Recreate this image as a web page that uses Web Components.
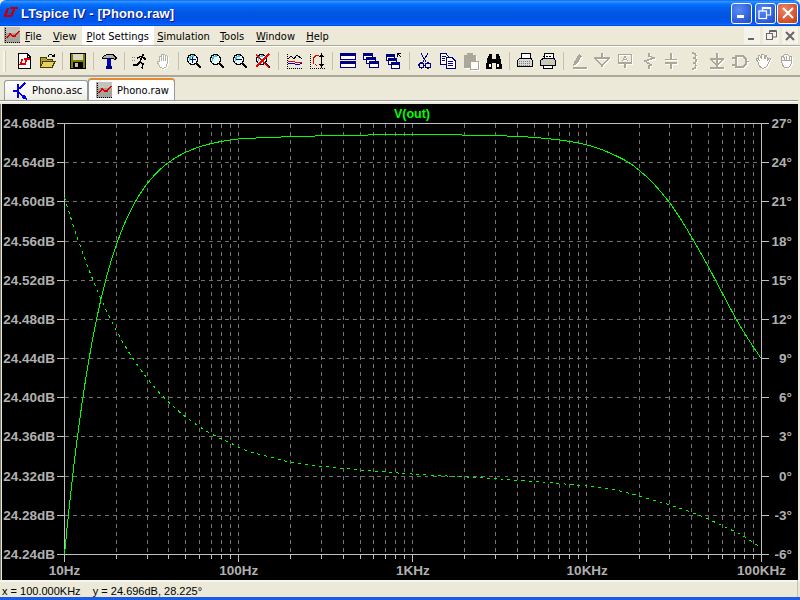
<!DOCTYPE html>
<html>
<head>
<meta charset="utf-8">
<title>LTspice IV</title>
<style>
  html, body { margin: 0; padding: 0; width: 800px; height: 600px; overflow: hidden; background: #ece9d8; }
</style>
</head>
<body>
<xp-window>
  <title-bar>LTspice IV - [Phono.raw]</title-bar>
  <menu-bar>
    <menu-item w="28.5"><u>F</u>ile</menu-item>
    <menu-item w="34.5"><u>V</u>iew</menu-item>
    <menu-item w="71.5" hot><u>P</u>lot Settings</menu-item>
    <menu-item w="60"><u>S</u>imulation</menu-item>
    <menu-item w="37"><u>T</u>ools</menu-item>
    <menu-item w="50"><u>W</u>indow</menu-item>
    <menu-item w="34"><u>H</u>elp</menu-item>
  </menu-bar>
  <tool-bar>
    <tool-btn icon="newdoc"></tool-btn>
    <tool-btn icon="open"></tool-btn>
    <tool-sep></tool-sep>
    <tool-btn icon="save"></tool-btn>
    <tool-sep></tool-sep>
    <tool-btn icon="hammer"></tool-btn>
    <tool-sep></tool-sep>
    <tool-btn icon="run"></tool-btn>
    <tool-btn icon="pan" off></tool-btn>
    <tool-sep></tool-sep>
    <tool-btn icon="zoomin"></tool-btn>
    <tool-btn icon="zoomfit"></tool-btn>
    <tool-btn icon="zoomout"></tool-btn>
    <tool-btn icon="zoomx"></tool-btn>
    <tool-sep></tool-sep>
    <tool-btn icon="autorange"></tool-btn>
    <tool-btn icon="manual"></tool-btn>
    <tool-sep></tool-sep>
    <tool-btn icon="tile"></tool-btn>
    <tool-btn icon="cascade"></tool-btn>
    <tool-btn icon="cascade2"></tool-btn>
    <tool-sep></tool-sep>
    <tool-btn icon="cut"></tool-btn>
    <tool-btn icon="copy"></tool-btn>
    <tool-btn icon="paste" off></tool-btn>
    <tool-btn icon="find"></tool-btn>
    <tool-sep></tool-sep>
    <tool-btn icon="preview"></tool-btn>
    <tool-btn icon="print"></tool-btn>
    <tool-sep></tool-sep>
    <tool-btn icon="wire" off></tool-btn>
    <tool-btn icon="ground" off></tool-btn>
    <tool-btn icon="label" off></tool-btn>
    <tool-btn icon="res" off></tool-btn>
    <tool-btn icon="cap" off></tool-btn>
    <tool-btn icon="ind" off></tool-btn>
    <tool-btn icon="diode" off></tool-btn>
    <tool-btn icon="gate" off></tool-btn>
    <tool-btn icon="hand" off></tool-btn>
    <tool-btn icon="fist" off></tool-btn>
  </tool-bar>
  <tab-strip>
    <doc-tab icon="transistor">Phono.asc</doc-tab>
    <doc-tab icon="plot" active>Phono.raw</doc-tab>
  </tab-strip>
  <plot-view></plot-view>
  <status-bar>x = 100.000KHz&nbsp;&nbsp;&nbsp;&nbsp;y = 24.696dB, 28.225°</status-bar>
</xp-window>

<script>
const logo = (x, y, s, c) => `<g transform="translate(${x} ${y}) scale(${s})" fill="none" stroke="${c}" stroke-width="2.400"><path d="M5 1 L2 9 H8"/><path d="M7 1 H15 M11.500 1 L8 10"/></g>`;
const axes = (c) => `<path d="M1.500 1V16M1 15.500H16" stroke="${c}" stroke-dasharray="1 1" fill="none"/>`;
const lens = `<circle cx="6.500" cy="6.500" r="5" fill="#e8fbff" stroke="#000" stroke-width="1.300"/><path d="M3.500 8A4 4 0 0 1 8 3" stroke="#36c6e0" stroke-width="1.500" fill="none"/><path d="M10.500 10.500L15 15" stroke="#000" stroke-width="2.200"/>`;
const win = (x, y, w, h) => `<rect x="${x + .5}" y="${y + .5}" width="${w}" height="${h}" fill="#fff" stroke="#000080"/><rect x="${x}" y="${y}" width="${w + 1}" height="3" fill="#000080"/>`;

const ICONS = {
  logo: logo(0, 2, 1, '#c00000'),
  plot: `<rect x="0" y="0" width="16" height="16" fill="#a4a49c"/><rect x="2" y="0" width="14" height="6" fill="#c4c4bc"/>${axes('#000')}<path d="M3 11L6 7L9 9L11 9L15 4" stroke="#e00000" stroke-width="1.600" fill="none"/>`,
  transistor: `<path d="M5 1V15" stroke="#0000e0" stroke-width="2"/><path d="M0 8H5M6 6L12 0M6 10L14 16" stroke="#0000e0" stroke-width="1.500" fill="none"/><path d="M14 17L9 15L12 11Z" fill="#0000e0"/>`,
  newdoc: `<path d="M2.500 .5H11L14.500 4V15.500H2.500Z" fill="#fff" stroke="#000"/><path d="M11 .5V4H14.500" fill="none" stroke="#000"/>${logo(3, 5, .7, '#e00000')}`,
  open: `<path d="M1.500 14.500V4.500H7L8 6H13V14.500Z" fill="#b8a030" stroke="#404000"/><path d="M1.500 14.500L4 8.500H16L13 14.500Z" fill="#e8d060" stroke="#404000"/><path d="M9 3.500C10 1 13 1 14.500 3.500" fill="none" stroke="#000"/><path d="M12 4H16V1Z" fill="#000"/>`,
  save: `<rect x=".5" y=".5" width="15" height="15" fill="#808000" stroke="#000"/><rect x="3" y="1" width="10" height="6" fill="#d8d8c0"/><rect x="3" y="9" width="10" height="6" fill="#000"/><rect x="5" y="10" width="3" height="4" fill="#c0c0a0"/>`,
  hammer: `<path d="M1.500 5.500C2 2 5 1.500 8 1.500H12L15.500 5L14 6.500L11.500 5H3.500Z" fill="#b0b0b0" stroke="#000"/><rect x="6" y="6" width="4" height="7" fill="#0000c0"/><rect x="5" y="13" width="6" height="3" fill="#000080"/>`,
  run: `<circle cx="11" cy="2" r="1.500" fill="#000"/><path d="M5 5L9 3.500L12 5L14 7M9.500 4L8 9L11 11L10 15.500M8 9L5 12L1 12" stroke="#000" stroke-width="1.500" fill="none"/><path d="M0 4H3M0 7H3" stroke="#808080" stroke-dasharray="1 1"/>`,
  pan: `<path d="M4 8V4Q5 3 6 4V2Q7 1 8 2V2Q9 1 10 2V3Q11 2 12 3V11Q12 15 9 15H7Q5 15 4 12L2 9Q3 7 4 9Z" fill="#fff" stroke="#b4b4a8"/><path d="M6 4V8M8 2V8M10 3V8" stroke="#b4b4a8"/>`,
  zoomin: `${lens}<path d="M3.500 6.500H9.500M6.500 3.500V9.500" stroke="#000080"/>`,
  zoomfit: `${lens}`,
  zoomout: `${lens}<path d="M3.500 6.500H9.500" stroke="#000080"/>`,
  zoomx: `${lens}<path d="M1 2L14 14M14 1L1 14" stroke="#f00000" stroke-width="1.500"/>`,
  autorange: `${axes('#000')}<path d="M2 6L5 3L8 6L11 2L16 6" stroke="#000" fill="none"/><path d="M2 8H7L10 9.500H16" stroke="#f00000" fill="none"/><path d="M2 11L7 10L11 12L16 10.500" stroke="#0000c0" fill="none"/>`,
  manual: `${axes('#000')}<path d="M4 11V7Q5 2 10 2M8 13L6 11" stroke="#e00000" fill="none"/><path d="M12.500 3V12" stroke="#000" stroke-width="1.300"/><path d="M12.500 0L15 4H10ZM12.500 15L15 11H10Z" fill="#000"/>`,
  tile: `${win(0, 0, 15, 6)}${win(0, 8, 15, 6)}`,
  cascade: `${win(0, 0, 9, 6)}${win(3, 4, 9, 6)}${win(6, 8, 9, 6)}`,
  cascade2: `${win(0, 1, 8, 6)}${win(2, 5, 8, 6)}${win(5, 9, 8, 6)}<path d="M11.500 .5L15 4M11.500 .5H14.500M11.500 .5V3.500" stroke="#000" fill="none"/>`,
  cut: `<path d="M4 0L9 9M11 0L6 9" stroke="#000080" fill="none"/><circle cx="4.500" cy="12.500" r="2.500" fill="none" stroke="#000080" stroke-width="1.300"/><circle cx="11" cy="12.500" r="2.500" fill="none" stroke="#000080" stroke-width="1.300"/>`,
  copy: `<path d="M.5 .5H6L8 3V11H.5Z" fill="#fff" stroke="#000080"/><path d="M6.500 4.500H12L15 7.500V15.500H6.500Z" fill="#fff" stroke="#000080"/><path d="M2 3H6M2 5H5M2 7H5M8 8H13M8 10H13M8 12H13" stroke="#000080"/>`,
  paste: `<rect x="1" y="2" width="12" height="13" rx="1" fill="#aca899"/><rect x="4" y="0" width="6" height="3" fill="#aca899"/><rect x="7.500" y="8.500" width="8" height="7.500" fill="#fff" stroke="#aca899"/>`,
  find: `<path d="M2 3H6V6H10V3H14L16 13V16H10V10H6V16H0V13Z" fill="#000"/><rect x="3" y="11" width="2" height="3" fill="#fff"/><rect x="11" y="11" width="2" height="3" fill="#fff"/><rect x="3" y="1" width="3" height="2" fill="#000"/><rect x="10" y="1" width="3" height="2" fill="#000"/>`,
  preview: `<path d="M4.500 .5H13.500V6H4.500Z" fill="#fff" stroke="#000"/><path d="M.5 7.500L3 5H14L15.500 7.500V13.500H.5Z" fill="#d8d8d8" stroke="#000"/><path d="M2 8H14M2 10H14M2 12H14" stroke="#808080" stroke-dasharray="1 1"/>`,
  print: `<path d="M4.500 .5H13.500V6H4.500Z" fill="#fff" stroke="#000"/><path d="M3 3H12M3 5H12" stroke="#000" stroke-dasharray="2 1"/><path d="M.5 7.500L3 5.500H14L15.500 7.500V12.500H.5Z" fill="#c8c8c8" stroke="#000"/><rect x="8" y="9" width="3" height="1" fill="#e0d000"/><path d="M3.500 13V15.500H12.500V13" fill="#fff" stroke="#000"/>`,
  wire: `<path d="M2 15H16" stroke="#aca899" stroke-width="1.500"/><path d="M2 13L3 9L8 1L11 3L6 11Z" fill="#aca899"/>`,
  ground: `<path d="M8 0V5M1 5H15L8 13Z" stroke="#aca899" stroke-width="1.500" fill="none"/>`,
  label: `<rect x="1.500" y="1.500" width="13" height="8.500" fill="none" stroke="#aca899" stroke-width="1.500"/><path d="M8 10V15" stroke="#aca899" stroke-width="1.500"/><path d="M5.500 8L8 3L10.500 8M6.500 6H9.500" stroke="#aca899" fill="none"/>`,
  res: `<path d="M9 0V3L14 5L5 8L11 12L9 13V16" stroke="#aca899" stroke-width="1.500" fill="none"/>`,
  cap: `<path d="M8 0V6M8 10V16M2 6.500H14M2 10H14" stroke="#aca899" stroke-width="1.500"/>`,
  ind: `<path d="M6 0C11 0 11 5 7 5C11 5 11 10 7 10C11 10 11 16 6 16" stroke="#aca899" stroke-width="1.500" fill="none"/>`,
  diode: `<path d="M8 0V16M1 6H15M1 15H15M2 6L8 13L14 6" stroke="#aca899" stroke-width="1.500" fill="none"/>`,
  gate: `<path d="M4 3H9A5 5 0 0 1 9 14H4Z" fill="none" stroke="#aca899" stroke-width="2"/><path d="M0 5H4M0 12H4M14 8.500H17" stroke="#aca899" stroke-width="1.500"/>`,
  hand: `<path d="M3 9L1 6Q2 5 4 7L3 3Q4 1 5 3L7 6L6 2Q7 0 9 2L10 6L10 3Q12 2 12 4L12 8L14 5Q16 5 15 7L12 13Q10 16 7 15Q4 14 3 9Z" fill="#fff" stroke="#aca899"/>`,
  fist: `<path d="M3 6Q3 3 5 4Q5 1 8 2Q10 1 11 3Q14 3 14 6L13 11Q12 15 8 15Q5 14 4 10Z" fill="#fff" stroke="#aca899"/><path d="M6 4V7M8.500 3V7M11 4V7M3 7H13" stroke="#aca899" fill="none"/>`
};

const icon = (name, size = 16) => `<svg width="${size}" height="${size}" viewBox="0 0 16 16" shape-rendering="crispEdges" style="overflow:visible;display:block;flex:none">${ICONS[name]}</svg>`;

const UI_FONT = `"DejaVu Sans Condensed", "DejaVu Sans", "Liberation Sans", sans-serif`;

class XpWindow extends HTMLElement {
  constructor() {
    super();
    this.attachShadow({ mode: 'open' });
    this.shadowRoot.innerHTML = `
      <style>
        :host { display: flex; flex-direction: column; width: 800px; height: 600px; background: #ece9d8; color: #000; font: 11px ${UI_FONT}; }
      </style>
      <slot></slot>`;
  }
}

class TitleBar extends HTMLElement {
  constructor() {
    super();
    this.attachShadow({ mode: 'open' });
    this.shadowRoot.innerHTML = `
      <style>
        :host { display: flex; align-items: center; height: 26px; flex: none; padding: 0 2px 0 3px; box-sizing: border-box; border-radius: 6px 6px 0 0;
          background: linear-gradient(#0058ee 0%, #3593ff 4%, #288eff 8%, #127dff 12%, #036ffc 18%, #0262ee 30%, #0057e5 50%, #0054e3 70%, #0055eb 82%, #005bff 90%, #026afe 94%, #003dd7 100%); }
        .text { flex: 1; margin-left: 2px; color: #fff; font: bold 13px "Liberation Sans", sans-serif; letter-spacing: .15px; text-shadow: 1px 1px 0 #0f1089; white-space: nowrap; }
        .btn { width: 19px; height: 19px; margin-left: 2.500px; border: 1px solid #fff; border-radius: 3px; box-sizing: content-box; display: flex; align-items: center; justify-content: center;
          background: radial-gradient(circle at 35% 30%, #5a8cf2, #2f5fdc 65%, #2248c4); }
        .close { background: radial-gradient(circle at 35% 30%, #e8866a, #d5532c 65%, #b8391a); margin-left: 1.500px; }
        svg { display: block; }
      </style>
      ${icon('logo')}
      <span class="text"><slot></slot></span>
      <div class="btn"><svg width="12" height="12" viewBox="0 0 12 12"><rect x="1" y="8" width="7" height="3" fill="#fff"/></svg></div>
      <div class="btn"><svg width="14" height="14" viewBox="0 0 14 14" fill="none" stroke="#fff" stroke-width="1.200"><rect x="1" y="5" width="7.500" height="7.500"/><path d="M4.500 5V1.500H12.500V9H8.500M4.500 2.300H12.500" /></svg></div>
      <div class="btn close"><svg width="14" height="14" viewBox="0 0 14 14" stroke="#fff" stroke-width="2"><path d="M2 2L12 12M12 2L2 12"/></svg></div>`;
  }
}

class MenuBar extends HTMLElement {
  constructor() {
    super();
    this.attachShadow({ mode: 'open' });
    this.shadowRoot.innerHTML = `
      <style>
        :host { display: flex; align-items: stretch; height: 21px; flex: none; box-sizing: border-box; padding: 0 2px 1px 4px; border-bottom: 1px solid #fff; box-shadow: inset 0 -1px 0 #aca899; }
        .icon { width: 15px; padding-top: 1px; }
        .items { display: flex; flex: 1; }
        .mdi { display: flex; gap: 3px; padding-top: 1px; }
        .mdi div { width: 16px; height: 17px; background: #f4f3ea; display: flex; align-items: center; justify-content: center; }
      </style>
      <div class="icon">${icon('plot')}</div>
      <div class="items"><slot></slot></div>
      <div class="mdi">
        <div><svg width="10" height="10" viewBox="0 0 10 10"><rect x="1" y="7" width="6" height="2" fill="#666"/></svg></div>
        <div><svg width="11" height="11" viewBox="0 0 11 11" fill="none" stroke="#666"><rect x=".5" y="3.500" width="6" height="6"/><path d="M3.500 3.500V.5H10.500V7H7M3.500 1.500H10.500"/></svg></div>
        <div><svg width="10" height="10" viewBox="0 0 10 10" stroke="#666" stroke-width="2"><path d="M1 1L9 9M9 1L1 9"/></svg></div>
      </div>`;
  }
}

class MenuItem extends HTMLElement {
  constructor() {
    super();
    this.attachShadow({ mode: 'open' });
    this.shadowRoot.innerHTML = `
      <style>
        :host { display: flex; align-items: center; justify-content: center; flex: none; white-space: nowrap; box-sizing: border-box; padding-top: 1px; }
        :host([hot]) { background: #fff; }
      </style>
      <span><slot></slot></span>`;
  }
  connectedCallback() {
    this.style.width = this.getAttribute('w') + 'px';
  }
}

class ToolBar extends HTMLElement {
  constructor() {
    super();
    this.attachShadow({ mode: 'open' });
    this.shadowRoot.innerHTML = `
      <style>
        :host { display: flex; align-items: center; height: 30px; flex: none; box-sizing: border-box; padding: 0 0 1px 12.500px; position: relative; border-bottom: 2px solid #aca899; }
        .grip { position: absolute; left: 3px; top: 4px; width: 2px; height: 21px; background: #f7f6ee; border-right: 1px solid #cfccb8; }
      </style>
      <div class="grip"></div>
      <slot></slot>`;
  }
}

class ToolBtn extends HTMLElement {
  constructor() {
    super();
    this.attachShadow({ mode: 'open' });
  }
  connectedCallback() {
    this.shadowRoot.innerHTML = `
      <style>
        :host { display: flex; width: 23px; height: 22px; flex: none; align-items: center; justify-content: center; }
        :host([off]) svg { filter: drop-shadow(1px 1px 0 #fff); }
      </style>
      ${icon(this.getAttribute('icon'))}`;
  }
}

class ToolSep extends HTMLElement {
  constructor() {
    super();
    this.attachShadow({ mode: 'open' });
    this.shadowRoot.innerHTML = `
      <style>
        :host { display: flex; width: 8px; height: 18px; flex: none; justify-content: center; }
        div { width: 1px; background: #c5c2b2; }
      </style>
      <div></div>`;
  }
}

class TabStrip extends HTMLElement {
  constructor() {
    super();
    this.attachShadow({ mode: 'open' });
    this.shadowRoot.innerHTML = `
      <style>
        :host { display: flex; align-items: flex-end; height: 27px; flex: none; box-sizing: border-box; padding: 0 2px 4px 4px; position: relative; }
        .line { position: absolute; left: 0; right: 2px; bottom: 3px; height: 1px; background: #919b9c; box-shadow: 0 1px 0 #fff; }
      </style>
      <div class="line"></div>
      <slot></slot>`;
  }
}

class DocTab extends HTMLElement {
  constructor() {
    super();
    this.attachShadow({ mode: 'open' });
  }
  connectedCallback() {
    this.shadowRoot.innerHTML = `
      <style>
        :host { display: flex; align-items: center; flex: none; position: relative; box-sizing: border-box; width: 84px; height: 20px; padding: 0 0 0 8px; gap: 3px;
          background: linear-gradient(#fff, #f4f3ee 70%, #ecebe2); border: 1px solid #919b9c; border-bottom: 0; border-radius: 3px 3px 0 0; }
        :host([active]) { width: 87px; height: 22px; padding: 2px 0 0 7px; gap: 5px; border: 1px solid #919b9c; border-top: 0; border-bottom: 0; background: linear-gradient(#fff, #fcfcfe); box-shadow: inset 0 2px 0 #e68b2c; }
      </style>
      ${icon(this.getAttribute('icon'))}
      <span><slot></slot></span>`;
  }
}

const xToHz = (x) => Math.pow(10, 1 + (x - 64.5) / 174.1);
// low end follows one pole, the rest is measured from the trace in page pixels
const MAG = [];
for (let x = 64.5; x < 244; x += 3) {
  const r = 3.22 / xToHz(x);
  MAG.push([x, 134.5 + 979.5 * 10 * Math.log10(1 + r * r)]);
}
MAG.push([270,137.5],[300,136.3],[350,135.3],[418,134.5],[478,135.3],[515,136.3],[535,137.5],[560,140],[580,143.3],[600,149],[620,157.7],[630,163.3],[640,171],[653.3,183.3],[668.3,201],[680,218],[693.3,240],[708.3,266.7],[723.3,295],[736.7,320],[746.7,336.7],[761,358.3]);
const PHASE = [];
for (let x = 64.5; x < 238; x += 3) {
  PHASE.push([x, 475.6 - 13.06 * Math.atan(3.9 / xToHz(x)) * 180 / Math.PI]);
}
PHASE.push([238.3,447.3],[253.3,452.7],[273.3,457.7],[296.7,463.3],[350,469],[412,474],[500,479],[587,486],[620,491],[650,499.3],[670,505],[690,511.7],[710,520],[726.7,527.7],[743.3,536],[756.7,545],[761,548]);

class PlotView extends HTMLElement {
  constructor() {
    super();
    this.attachShadow({ mode: 'open' });
    const L = 64.5, R = 761.5, T = 123.5, B = 554.5;
    const dec = (R - L) / 4, row = (B - T) / 11;
    let grid = '', ticks = '', text = '';
    for (let d = 0; d < 4; d++) {
      for (let m = 2; m <= 10; m++) {
        const x = Math.round(L + dec * (d + Math.log10(m))) + .5 - 1;
        if (!(m === 10 && d === 3)) grid += `M${x} ${T}V${B}`;
        ticks += `M${x} ${B}V${B + (m === 10 ? 7 : 4)}`;
      }
    }
    const left = ['24.68dB','24.64dB','24.60dB','24.56dB','24.52dB','24.48dB','24.44dB','24.40dB','24.36dB','24.32dB','24.28dB','24.24dB'];
    const right = ['27°','24°','21°','18°','15°','12°','9°','6°','3°','0°','-3°','-6°'];
    left.forEach((s, i) => {
      const y = Math.round(T + row * i - .5) + .5;
      if (i > 0 && i < 11) grid += `M${L} ${y}H${R}`;
      ticks += `M57 ${y}H${L}M${R} ${y}H769`;
      text += `<text x="55" y="${y + 4.500}" text-anchor="end">${s}</text><text x="792" y="${y + 4.500}" text-anchor="end">${right[i]}</text>`;
    });
    ['10Hz','100Hz','1KHz','10KHz','100KHz'].forEach((s, i) => {
      text += `<text x="${L + dec * i}" y="575" text-anchor="middle">${s}</text>`;
    });
    this.shadowRoot.innerHTML = `
      <style>
        :host { display: block; flex: none; width: 796px; height: 476px; margin-left: 2px; background: #000; box-shadow: -1px 0 0 #ece9d8, -2px 0 0 #7f7d70; }
        svg { display: block; }
        text { font: bold 13.500px "Liberation Sans", sans-serif; fill: #b0b0b0; }
        .name { fill: #00ff00; font-size: 12.500px; }
      </style>
      <svg width="796" height="476" viewBox="2 104 796 476">
        <g shape-rendering="crispEdges" fill="none">
          <path d="${grid}" stroke="#747474" stroke-dasharray="4 4"/>
          <path d="${ticks}M${L} ${T}H${R}M${L} ${B}H${R}M${L} ${T}V${B + 7}M${R} ${T}V${B + 7}" stroke="#c0c0c0"/>
          <path d="${this.curve(PHASE)}" stroke="#00ff00" stroke-dasharray="3 4"/>
          <path d="${this.curve(MAG)}" stroke="#00ff00"/>
        </g>
        ${text}
        <text class="name" x="412" y="118" text-anchor="middle">V(out)</text>
      </svg>`;
  }
  // Catmull-Rom through the points
  curve(p) {
    let d = `M${p[0][0]} ${p[0][1]}`;
    for (let i = 0; i < p.length - 1; i++) {
      const a = p[Math.max(i - 1, 0)], b = p[i], c = p[i + 1], e = p[Math.min(i + 2, p.length - 1)];
      d += `C${b[0] + (c[0] - a[0]) / 6} ${b[1] + (c[1] - a[1]) / 6} ${c[0] - (e[0] - b[0]) / 6} ${c[1] - (e[1] - b[1]) / 6} ${c[0]} ${c[1]}`;
    }
    return d;
  }
}

class StatusBar extends HTMLElement {
  constructor() {
    super();
    this.attachShadow({ mode: 'open' });
    this.shadowRoot.innerHTML = `
      <style>
        :host { display: flex; align-items: center; flex: none; height: 20px; box-sizing: border-box; padding: 2px 0 0 2px; white-space: pre; font: 11px "Liberation Sans", sans-serif; position: relative;
          border-top: 2px solid #f7f6ee; border-bottom: 3px solid #1a5ce6; }
        .edge { position: absolute; right: 2px; top: -2px; bottom: 0; width: 1px; background: #c5c2b2; }
      </style>
      <slot></slot><div class="edge"></div>`;
  }
}

customElements.define('xp-window', XpWindow);
customElements.define('title-bar', TitleBar);
customElements.define('menu-bar', MenuBar);
customElements.define('menu-item', MenuItem);
customElements.define('tool-bar', ToolBar);
customElements.define('tool-btn', ToolBtn);
customElements.define('tool-sep', ToolSep);
customElements.define('tab-strip', TabStrip);
customElements.define('doc-tab', DocTab);
customElements.define('plot-view', PlotView);
customElements.define('status-bar', StatusBar);
</script>
</body>
</html>
